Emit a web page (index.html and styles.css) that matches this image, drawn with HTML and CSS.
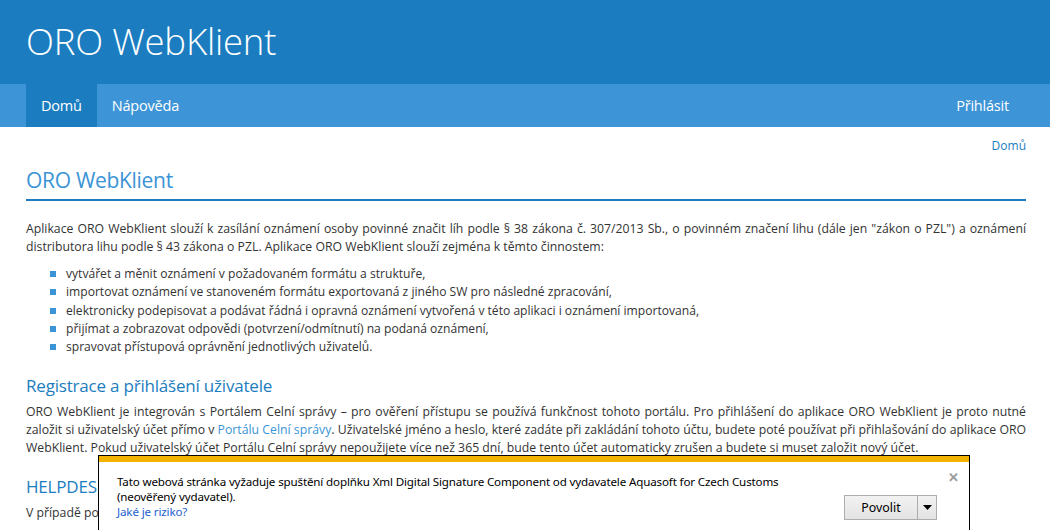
FILE: index.html
```html
<!DOCTYPE html>
<html lang="cs">
<head>
<meta charset="utf-8">
<title>ORO WebKlient</title>
<link rel="stylesheet" href="styles.css">
</head>
<body>
<header class="top">
  <div class="brand">ORO WebKlient</div>
</header>
<nav class="menu">
  <div class="menu-left">
    <a class="tab active">Domů</a>
    <a class="tab">Nápověda</a>
  </div>
  <a class="tab login">Přihlásit</a>
</nav>
<main class="content">
  <div class="crumbs"><a>Domů</a></div>
  <h1 class="title">ORO WebKlient</h1>
  <p class="text">Aplikace ORO WebKlient slouží k zasílání oznámení osoby povinné značit líh podle § 38 zákona č. 307/2013 Sb., o povinném značení lihu (dále jen "zákon o PZL") a oznámení distributora lihu podle § 43 zákona o PZL. Aplikace ORO WebKlient slouží zejména k těmto činnostem:</p>
  <ul class="list">
    <li>vytvářet a měnit oznámení v požadovaném formátu a struktuře,</li>
    <li>importovat oznámení ve stanoveném formátu exportovaná z jiného SW pro následné zpracování,</li>
    <li>elektronicky podepisovat a podávat řádná i opravná oznámení vytvořená v této aplikaci i oznámení importovaná,</li>
    <li>přijímat a zobrazovat odpovědi (potvrzení/odmítnutí) na podaná oznámení,</li>
    <li>spravovat přístupová oprávnění jednotlivých uživatelů.</li>
  </ul>
  <h2 class="subtitle">Registrace a přihlášení uživatele</h2>
  <p class="text">ORO WebKlient je integrován s Portálem Celní správy – pro ověření přístupu se používá funkčnost tohoto portálu. Pro přihlášení do aplikace ORO WebKlient je proto nutné založit si uživatelský účet přímo v <a class="link">Portálu Celní správy</a>. Uživatelské jméno a heslo, které zadáte při zakládání tohoto účtu, budete poté používat při přihlašování do aplikace ORO WebKlient. Pokud uživatelský účet Portálu Celní správy nepoužijete více než 365 dní, bude tento účet automaticky zrušen a budete si muset založit nový účet.</p>
  <h2 class="subtitle upper">HELPDESK</h2>
  <p class="text">V případě potíží kontaktujte helpdesk.</p>
</main>
<div class="infobar">
  <div class="infobar-stripe"></div>
  <div class="infobar-body">
    <div class="infobar-msg">
      <div>Tato webová stránka vyžaduje spuštění doplňku Xml Digital Signature Component od vydavatele Aquasoft for Czech Customs</div>
      <div>(neověřený vydavatel).</div>
      <a class="infobar-link">Jaké je riziko?</a>
    </div>
    <div class="infobar-side">
      <span class="infobar-close">✕</span>
      <div class="split">
        <span class="split-main">Povolit</span>
        <span class="split-arrow"><svg width="9" height="5" viewBox="0 0 9 5"><path d="M0 0H9L4.5 5Z" fill="#000"/></svg></span>
      </div>
    </div>
  </div>
</div>
</body>
</html>
```

FILE: styles.css
```css
html, body {
  margin: 0;
  padding: 0;
}
body {
  font-family: "Open Sans", "Noto Sans", sans-serif;
  color: #333;
  background: #fff;
  overflow: hidden;
  height: 530px;
}
.top {
  background: #1b7dc0;
  height: 84px;
  padding: 0 26px;
  display: flex;
  align-items: center;
}
.brand {
  color: #fff;
  font-weight: 300;
  font-size: 36.5px;
  letter-spacing: -0.2px;
  margin-top: -3px;
}
.menu {
  background: #3d94d6;
  height: 43px;
  padding: 0 26px;
  display: flex;
  justify-content: space-between;
  align-items: stretch;
}
.menu-left {
  display: flex;
}
.tab {
  color: #fff;
  font-size: 14.5px;
  padding: 0 15px;
  display: flex;
  align-items: center;
  letter-spacing: -0.2px;
}
.tab.active {
  background: #1b7dc0;
}
.tab.login {
  padding-right: 15px;
}
.content {
  padding: 0 24px 0 26px;
}
.crumbs {
  text-align: right;
  font-size: 12px;
  padding-top: 10px;
  height: 20px;
}
.crumbs a {
  color: #1b7dc0;
}
.title {
  margin: 8px 0 0;
  font-weight: 400;
  font-size: 21px;
  color: #3a94d6;
  letter-spacing: -0.3px;
  line-height: 30px;
  border-bottom: 2px solid #1b7dc0;
  padding-bottom: 4px;
}
.text {
  font-size: 12.25px;
  line-height: 18px;
  text-align: justify;
  margin: 19px 0 0;
}
.list {
  list-style: none;
  margin: 9px 0 0;
  padding: 0 0 0 40px;
  font-size: 12.1px;
  line-height: 18.3px;
}
.list li {
  position: relative;
}
.list li::before {
  content: "";
  position: absolute;
  left: -16px;
  top: 6px;
  width: 6px;
  height: 6px;
  background: #3a94d6;
}
.subtitle {
  font-weight: 400;
  font-size: 17px;
  color: #1b7dc0;
  margin: 18px 0 0;
  line-height: 24px;
  letter-spacing: -0.2px;
}
.subtitle + .text {
  margin-top: 5px;
}
.link {
  color: #3a94d6;
}
.infobar {
  position: absolute;
  left: 98px;
  top: 455px;
  width: 870px;
  height: 90px;
  border: 1px solid #000;
  background: #fff;
  font-family: "Noto Sans", "Open Sans", sans-serif;
}
.infobar-stripe {
  height: 6px;
  background: #f2b400;
}
.infobar-body {
  display: flex;
  justify-content: space-between;
  padding: 0 0 0 18px;
}
.infobar-msg {
  font-size: 11.6px;
  line-height: 15px;
  padding-top: 12px;
  color: #000;
  letter-spacing: -0.15px;
}
.infobar-link {
  color: #1e5fd0;
}
.infobar-side {
  display: flex;
  flex-direction: column;
  align-items: flex-end;
  padding: 8px 10px 0 0;
}
.infobar-close {
  color: #9a9a9a;
  font-size: 13px;
  font-weight: 700;
  line-height: 14px;
}
.split {
  display: flex;
  margin-top: 11px;
  margin-right: 22px;
  border: 1px solid #adadad;
  background: linear-gradient(#f2f2f2, #e3e3e3);
  height: 23px;
}
.split-main {
  width: 72px;
  display: flex;
  align-items: center;
  justify-content: center;
  font-size: 12.4px;
  color: #000;
  border-right: 1px solid #adadad;
}
.split-arrow {
  width: 18px;
  display: flex;
  align-items: center;
  justify-content: center;
}
```
